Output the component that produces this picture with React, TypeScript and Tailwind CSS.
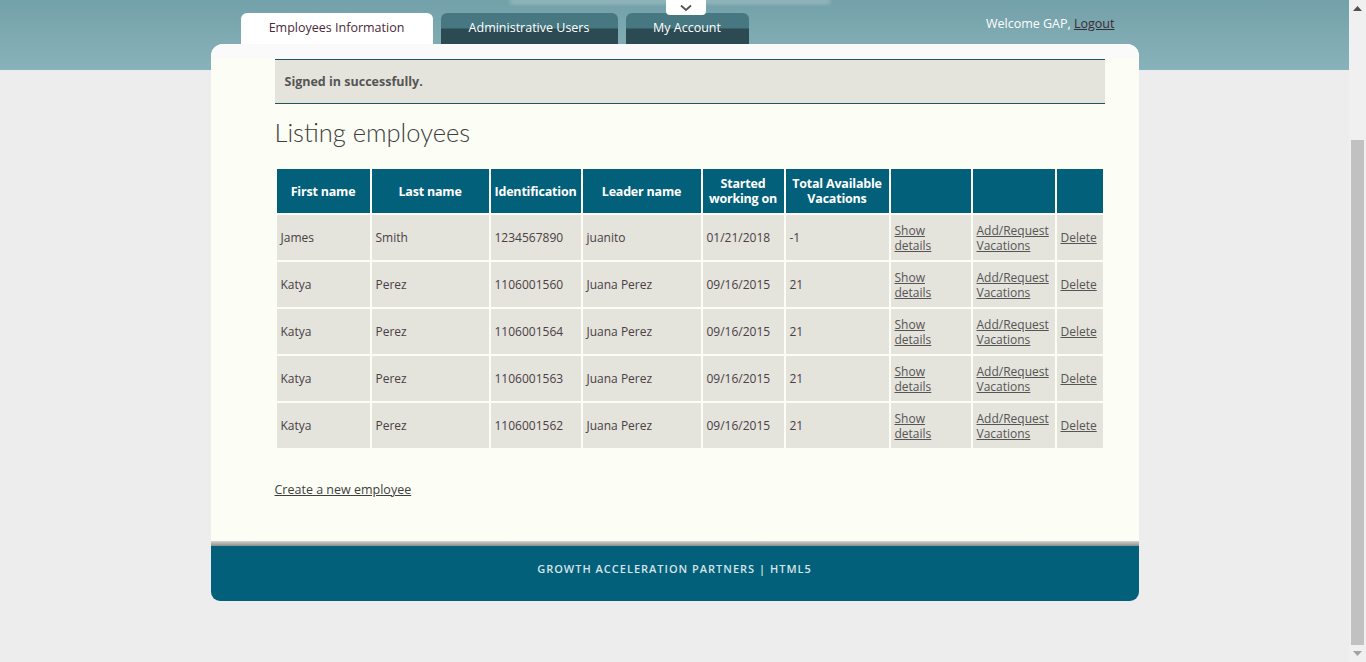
import React from "react";

const rows = [
  ["James", "Smith", "1234567890", "juanito", "01/21/2018", "-1"],
  ["Katya", "Perez", "1106001560", "Juana Perez", "09/16/2015", "21"],
  ["Katya", "Perez", "1106001564", "Juana Perez", "09/16/2015", "21"],
  ["Katya", "Perez", "1106001563", "Juana Perez", "09/16/2015", "21"],
  ["Katya", "Perez", "1106001562", "Juana Perez", "09/16/2015", "21"],
];

const widths = ["w-[93px]", "w-[117px]", "w-[90px]", "w-[118px]", "w-[81px]", "w-[103px]", "w-[80px]", "w-[82px]", "w-[46px]"];

export default function App() {
  const font = { fontFamily: '"Open Sans", "Noto Sans", sans-serif' };
  return (
    <div className="flex h-[662px] w-[1366px] overflow-hidden bg-[#ededed]" style={font}>
      <div className="relative flex-1">
        {/* top glow */}
        <div className="absolute left-[510px] top-0 h-[3px] w-[320px] bg-white/40 blur-[2px]" />
        {/* handle */}
        <div className="absolute left-[666px] top-0 flex h-[15px] w-[40px] items-center justify-center rounded-b-[4px] bg-white">
          <svg width="12" height="8" viewBox="0 0 12 8">
            <path d="M1 1.5 L6 6 L11 1.5" fill="none" stroke="#555" strokeWidth="1.8" />
          </svg>
        </div>
        <header className="h-[70px] bg-gradient-to-b from-[#73a1a9] to-[#89b2ba]">
          <div className="mx-auto flex w-[928px] items-start justify-between pt-[13px] pl-[30px] pr-[24px]">
            <nav className="flex gap-[8px]">
              <div className="flex h-[31px] w-[192px] items-center justify-center rounded-t-[6px] bg-white text-[12.5px] text-[#4a2a3a]">
                Employees Information
              </div>
              <div className="flex h-[31px] w-[177px] items-center justify-center rounded-t-[6px] bg-[linear-gradient(to_bottom,#477780_0%,#477780_48%,#2b4a51_52%,#2b4a51_100%)] text-[12.5px] font-medium text-white">
                Administrative Users
              </div>
              <div className="flex h-[31px] w-[123px] items-center justify-center rounded-t-[6px] bg-[linear-gradient(to_bottom,#477780_0%,#477780_48%,#2b4a51_52%,#2b4a51_100%)] text-[12.5px] font-medium text-white">
                My Account
              </div>
            </nav>
            <div className="pt-[2px] text-[12.5px] text-white">
              Welcome GAP, <a className="text-[#3b2a36] underline" href="#">Logout</a>
            </div>
          </div>
        </header>

        <main className="relative mx-auto -mt-[26px] w-[928px] overflow-hidden rounded-[12px] rounded-b-[9px] bg-[#fcfdf5]">
          <div className="h-[15px] bg-[#fafafa]" />
          <div className="pl-[64px] pr-[34px]">
            <div className="flex h-[45px] items-center border-y border-[#1d5566] bg-[#e4e3dc] pl-[10px] pt-[1px] text-[12.5px] font-bold text-[#555]">
              Signed in successfully.
            </div>
            <h1
              className="mt-[12px] mb-[19px] h-[32px] text-[25.5px] leading-[32px] font-light text-[#3f3f3f]"
              style={{ fontFamily: '"Lato", "Open Sans", sans-serif', fontWeight: 300 }}
            >
              Listing employees
            </h1>
            <table className="w-[830px] table-fixed border-separate border-spacing-[2px]">
              <thead>
                <tr className="h-[44px]">
                  {["First name", "Last name", "Identification", "Leader name", "Started working on", "Total Available Vacations", "", "", ""].map((h, i) => (
                    <th key={i} className={`${widths[i]} bg-[#03607a] px-[2px] text-center text-[12.5px] leading-[15px] font-bold tracking-[-0.2px] text-white`}>
                      {i === 4 ? (<>Started<br />working on</>) : i === 5 ? (<>Total Available<br />Vacations</>) : h}
                    </th>
                  ))}
                </tr>
              </thead>
              <tbody>
                {rows.map((r, ri) => (
                  <tr key={ri} className="h-[45px]">
                    {r.map((c, ci) => (
                      <td key={ci} className="bg-[#e4e3dc] px-[4px] text-[12px] text-[#4a4045]">
                        {c}
                      </td>
                    ))}
                    <td className="bg-[#e4e3dc] px-[4px] text-[12px] leading-[15px] text-[#555]">
                      <a className="underline" href="#">Show<br />details</a>
                    </td>
                    <td className="bg-[#e4e3dc] px-[4px] text-[12px] leading-[15px] text-[#555]">
                      <a className="underline" href="#">Add/Request<br />Vacations</a>
                    </td>
                    <td className="bg-[#e4e3dc] px-[4px] text-[12px] text-[#555]">
                      <a className="underline" href="#">Delete</a>
                    </td>
                  </tr>
                ))}
              </tbody>
            </table>
            <div className="mt-[30px] mb-[41px] h-[20px] text-[12.5px] leading-[20px] text-[#3f3f3f]">
              <a className="underline" href="#">Create a new employee</a>
            </div>
          </div>
          <footer className="bg-[#03607a]">
            <div className="h-[5px] bg-gradient-to-b from-[#d4d4d0] to-[#8d8d8d]" />
            <div className="flex h-[55px] items-center justify-center pb-[8px] text-[11px] font-semibold tracking-[1px] text-[#d6e4e8]">
              GROWTH ACCELERATION PARTNERS | HTML5
            </div>
          </footer>
        </main>
      </div>

      {/* scrollbar */}
      <div className="flex w-[17px] flex-col bg-[#f0f0f0]">
        <div className="flex h-[17px] items-center justify-center">
          <svg width="9" height="5" viewBox="0 0 9 5"><path d="M0 5 L4.5 0 L9 5 Z" fill="#505050" /></svg>
        </div>
        <div className="mt-[123px] mx-[2px] h-[505px] bg-[#c1c1c1]" />
        <div className="flex flex-1 items-center justify-center">
          <svg width="9" height="5" viewBox="0 0 9 5"><path d="M0 0 L4.5 5 L9 0 Z" fill="#a3a3a3" /></svg>
        </div>
      </div>
    </div>
  );
}
